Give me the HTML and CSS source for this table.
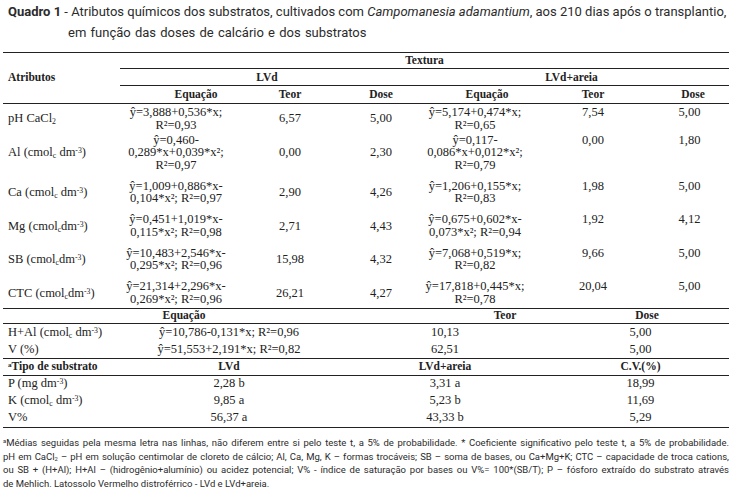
FILE: index.html
```html
<!DOCTYPE html>
<html lang="pt">
<head>
<meta charset="utf-8">
<title>Quadro 1</title>
<link rel="stylesheet" href="styles.css">
</head>
<body>
<div class="title">
  <p class="t1"><b>Quadro 1</b> - Atributos químicos dos substratos, cultivados com <i>Campomanesia adamantium</i>, aos 210 dias após o transplantio,</p>
  <p class="t2">em função das doses de calcário e dos substratos</p>
</div>

<div class="tbl">
  <div class="head g7">
    <div class="c-attr hb">Atributos</div>
    <div class="c-textura hb">Textura</div>
    <div class="c-lvd hb">LVd</div>
    <div class="c-lvda hb">LVd+areia</div>
    <div class="h3 hb sh-e1">Equação</div>
    <div class="h3 hb">Teor</div>
    <div class="h3 hb">Dose</div>
    <div class="h3 hb sh-e2">Equação</div>
    <div class="h3 hb">Teor</div>
    <div class="h3 hb sh-d2">Dose</div>
  </div>

  <div class="sec1">
    <div class="row g7 r-ph">
      <div class="lab">pH CaCl<sub>2</sub></div>
      <div class="eq">ŷ=3,888+0,536*x;<br>R²=0,93</div>
      <div class="val">6,57</div>
      <div class="val">5,00</div>
      <div class="eq">ŷ=5,174+0,474*x;<br>R²=0,65</div>
      <div class="val top">7,54</div>
      <div class="val top">5,00</div>
    </div>
    <div class="row g7 r-al">
      <div class="lab">Al (cmol<sub>c</sub> dm<sup>-3</sup>)</div>
      <div class="eq">ŷ=0,460-<br>0,289*x+0,039*x²;<br>R²=0,97</div>
      <div class="val">0,00</div>
      <div class="val">2,30</div>
      <div class="eq">ŷ=0,117-<br>0,086*x+0,012*x²;<br>R²=0,79</div>
      <div class="val top">0,00</div>
      <div class="val top">1,80</div>
    </div>
    <div class="row g7">
      <div class="lab">Ca (cmol<sub>c</sub> dm<sup>-3</sup>)</div>
      <div class="eq">ŷ=1,009+0,886*x-<br>0,104*x²; R²=0,97</div>
      <div class="val">2,90</div>
      <div class="val">4,26</div>
      <div class="eq">ŷ=1,206+0,155*x;<br>R²=0,83</div>
      <div class="val top">1,98</div>
      <div class="val top">5,00</div>
    </div>
    <div class="row g7">
      <div class="lab">Mg (cmol<sub>c</sub>dm<sup>-3</sup>)</div>
      <div class="eq">ŷ=0,451+1,019*x-<br>0,115*x²; R²=0,98</div>
      <div class="val">2,71</div>
      <div class="val">4,43</div>
      <div class="eq">ŷ=0,675+0,602*x-<br>0,073*x²; R²=0,94</div>
      <div class="val top">1,92</div>
      <div class="val top">4,12</div>
    </div>
    <div class="row g7">
      <div class="lab">SB (cmol<sub>c</sub>dm<sup>-3</sup>)</div>
      <div class="eq">ŷ=10,483+2,546*x-<br>0,295*x²; R²=0,96</div>
      <div class="val">15,98</div>
      <div class="val">4,32</div>
      <div class="eq">ŷ=7,068+0,519*x;<br>R²=0,82</div>
      <div class="val top">9,66</div>
      <div class="val top">5,00</div>
    </div>
    <div class="row g7 r-ctc">
      <div class="lab">CTC (cmol<sub>c</sub>dm<sup>-3</sup>)</div>
      <div class="eq">ŷ=21,314+2,296*x-<br>0,269*x²; R²=0,96</div>
      <div class="val">26,21</div>
      <div class="val">4,27</div>
      <div class="eq">ŷ=17,818+0,445*x;<br>R²=0,78</div>
      <div class="val top">20,04</div>
      <div class="val top">5,00</div>
    </div>
  </div>

  <div class="sec2">
    <div class="head2 g4">
      <div></div>
      <div class="hb sh2-e">Equação</div>
      <div class="hb sh2-t">Teor</div>
      <div class="hb sh2-d">Dose</div>
    </div>
    <div class="row2 g4">
      <div class="lab">H+Al (cmol<sub>c</sub> dm<sup>-3</sup>)</div>
      <div class="val">ŷ=10,786-0,131*x; R²=0,96</div>
      <div class="val">10,13</div>
      <div class="val">5,00</div>
    </div>
    <div class="row2 g4">
      <div class="lab">V (%)</div>
      <div class="val">ŷ=51,553+2,191*x; R²=0,82</div>
      <div class="val">62,51</div>
      <div class="val">5,00</div>
    </div>
  </div>

  <div class="sec3">
    <div class="head3 g4">
      <div class="hb lab"><sup>a</sup>Tipo de substrato</div>
      <div class="hb val">LVd</div>
      <div class="hb val">LVd+areia</div>
      <div class="hb val">C.V.(%)</div>
    </div>
    <div class="row3 g4">
      <div class="lab">P (mg dm<sup>-3</sup>)</div>
      <div class="val">2,28 b</div>
      <div class="val">3,31 a</div>
      <div class="val">18,99</div>
    </div>
    <div class="row3 g4">
      <div class="lab">K (cmol<sub>c</sub> dm<sup>-3</sup>)</div>
      <div class="val">9,85 a</div>
      <div class="val">5,23 b</div>
      <div class="val">11,69</div>
    </div>
    <div class="row3 g4">
      <div class="lab">V%</div>
      <div class="val">56,37 a</div>
      <div class="val">43,33 b</div>
      <div class="val">5,29</div>
    </div>
  </div>
</div>

<div class="foot">
  <div class="fl"><sup>a</sup>Médias seguidas pela mesma letra nas linhas, não diferem entre si pelo teste t, a 5% de probabilidade. * Coeficiente significativo pelo teste t, a 5% de probabilidade.</div>
  <div class="fl">pH em CaCl<sub>2</sub> – pH em solução centimolar de cloreto de cálcio; Al, Ca, Mg, K – formas trocáveis; SB – soma de bases, ou Ca+Mg+K; CTC – capacidade de troca cations,</div>
  <div class="fl">ou SB + (H+Al); H+Al – (hidrogênio+alumínio) ou acidez potencial; V% - índice de saturação por bases ou V%= 100*(SB/T); P – fósforo extraído do substrato através</div>
  <div class="fl fl-last">de Mehlich. Latossolo Vermelho distroférrico - LVd e LVd+areia.</div>
</div>
</body>
</html>
```

FILE: styles.css
```css
* { box-sizing: border-box; }
html, body { margin: 0; padding: 0; background: #fff; }
body { width: 733px; color: #222; }

sub, sup { font-size: 0.62em; line-height: 0; }
sup { vertical-align: 0.45em; }
sub { vertical-align: -0.25em; }

.title {
  padding-top: 1px;
  font-family: Roboto, "Liberation Sans", sans-serif;
  font-size: 13px;
  line-height: 21px;
  color: #2b2b2b;
}
.title p { margin: 0; white-space: nowrap; }
.t1 { margin-left: 8px !important; width: 707px; text-align: justify; text-align-last: justify; }
.t2 { margin-left: 68px !important; word-spacing: 1px; }
.title b { font-weight: 700; }

.tbl {
  margin: 9px 0 0 3px;
  width: 726px;
  border-top: 1px solid #222;
  font-family: "Liberation Serif", "Times New Roman", serif;
  font-size: 12.5px;
  line-height: 13px;
  color: #222;
}
.hb { font-weight: 700; font-size: 11.5px; }

.g7 { display: grid; grid-template-columns: 117px 112px 116px 66px 122px 114px 79px; }
.g4 { display: grid; grid-template-columns: 117px 218px 214px 177px; }

.head { border-bottom: 1px solid #222; }
.c-attr { grid-column: 1; grid-row: 1 / 4; align-self: center; padding: 0 0 2px 5px; }
.c-textura { grid-column: 2 / 8; grid-row: 1; text-align: center; padding: 1px 0; border-bottom: 1px solid #222; }
.c-lvd { grid-column: 2 / 5; grid-row: 2; text-align: center; padding: 1.5px 0; border-bottom: 1px solid #222; }
.c-lvda { grid-column: 5 / 8; grid-row: 2; text-align: center; padding: 1.5px 0; border-bottom: 1px solid #222; }
.h3 { grid-row: 3; text-align: center; padding: 2px 0; }
.sh-e1 { padding-left: 40px; }
.sh-e2 { padding-left: 24px; }
.sh-d2 { padding-left: 7px; }

.sec1 { border-bottom: 1px solid #222; }
.row { padding: 4.25px 0; line-height: 12.5px; }
.r-ph { padding: 2px 0 1px; }
.r-al { padding: 1.5px 0 4.5px; }
.r-ctc { padding: 4.25px 0 2.5px; }
.row > div, .row2 > div, .row3 > div, .head3 > div { white-space: nowrap; }
.lab { align-self: center; padding-left: 5px; }
.eq, .val { align-self: center; text-align: center; }
.top { align-self: start; }

.sec2 { border-bottom: 1px solid #222; }
.head2 { border-bottom: 1px solid #222; padding: 0.5px 0; }
.head2 > div { text-align: center; }
.sh2-e { padding-right: 90px; }
.sh2-t { padding-left: 120px; }
.sh2-d { padding-left: 13px; }
.row2 { padding: 2px 0; }

.sec3 { border-bottom: 1px solid #222; }
.head3 { border-bottom: 1px solid #222; padding: 1.5px 0; }
.row3 { padding: 1.5px 0 2.5px; }

.foot {
  margin: 8.5px 0 0 3px;
  width: 726px;
  font-family: Roboto, "Liberation Sans", sans-serif;
  font-size: 9.5px;
  line-height: 13.5px;
  color: #2b2b2b;
}
.fl { white-space: nowrap; text-align: justify; text-align-last: justify; }
.fl-last { text-align: left; text-align-last: auto; }
```
